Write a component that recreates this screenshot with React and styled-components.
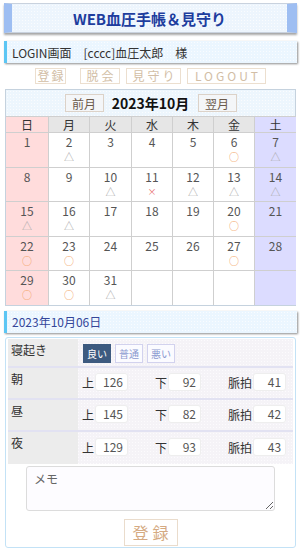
import React from "react";
import styled, { createGlobalStyle } from "styled-components";

const Global = createGlobalStyle`
  html, body { margin: 0; padding: 0; background: #fff; }
  body { font-family: "Noto Sans CJK JP", "Noto Sans", sans-serif; color: #333; }
  * { box-sizing: border-box; }
`;

const Page = styled.div`
  width: 300px;
  padding: 3px 3px 0 4px;
  display: flex;
  flex-direction: column;
`;

const dots = `radial-gradient(rgba(255,255,255,0.7) 0.6px, transparent 0.8px) 0 0 / 3px 3px`;

const Header = styled.div`
  height: 30px;
  border: 1px solid #c9d2de;
  border-left: 8px solid #9ebef2;
  border-right: 10px solid #9ebef2;
  background: ${dots}, #edf5fd;
  box-shadow: 0 2px 2px rgba(0,0,0,0.35);
  display: flex;
  align-items: center;
  justify-content: center;
  font-size: 15px;
  font-weight: bold;
  color: #1e3d9e;
`;

const Bar = styled.div`
  margin-top: ${p => p.$mt}px;
  height: 22px;
  border-left: 3px solid #5cc6f4;
  background: ${dots}, #ebf6ff;
  box-shadow: 1px 1px 2px rgba(0,0,0,0.45);
  display: flex;
  align-items: center;
  padding-left: 5px;
  font-size: 12px;
  color: ${p => p.$color};
  white-space: pre;
`;

const Nav = styled.div`
  margin-top: 5px;
  display: flex;
  justify-content: center;
  gap: 6px;
`;

const NavBtn = styled.div`
  width: ${p => p.$w}px;
  margin-right: ${p => p.$mr || 0}px;
  height: 16px;
  border: 1px solid #ecdfcf;
  color: #d2bea6;
  font-size: 12px;
  letter-spacing: ${p => p.$ls}px;
  white-space: nowrap;
  display: flex;
  align-items: center;
  justify-content: center;
  padding-left: ${p => p.$ls}px;
  line-height: 1;
`;

const Calendar = styled.div`
  margin-top: 5px;
  width: 291px;
  border: 1px solid #c5d2de;
  margin-left: 1px;
`;

const CalHead = styled.div`
  height: 26px;
  background: ${dots}, #edf6fd;
  display: flex;
  align-items: center;
  justify-content: center;
  gap: 7px;
`;

const MonthBtn = styled.div`
  width: 39px;
  height: 18px;
  border: 1px solid #dcd2c8;
  background: #f4f6f8;
  color: #6b5a4c;
  font-size: 12px;
  display: flex;
  align-items: center;
  justify-content: center;
`;

const MonthTitle = styled.div`
  font-size: 14px;
  font-weight: bold;
  color: #111;
  width: 80px;
  text-align: center;
`;

const Grid = styled.div`
  display: grid;
  grid-template-columns: 43px 41px 42px 41px 41px 41px 41px;
`;

const cellBg = (col, head) => {
  if (col === 0) return "#ffdcdc";
  if (col === 6) return "#dcdcff";
  return head ? "#e6e6e6" : "#ffffff";
};

const WeekHead = styled.div`
  height: 16px;
  background: ${p => cellBg(p.$col, true)};
  border-right: ${p => (p.$col === 6 ? "none" : "1px solid #cfcfcf")};
  border-top: 1px solid #cfcfcf;
  font-size: 12px;
  color: #333;
  display: flex;
  align-items: center;
  justify-content: center;
  line-height: 1;
`;

const Day = styled.div`
  height: 34.5px;
  background: ${p => cellBg(p.$col, false)};
  border-right: ${p => (p.$col === 6 ? "none" : "1px solid #cfcfcf")};
  border-top: 1px solid #cfcfcf;
  display: flex;
  flex-direction: column;
  align-items: center;
  padding-top: 2px;
`;

const DayNum = styled.div`
  font-size: 12px;
  color: #555;
  line-height: 14px;
`;

const markColor = { "△": "#aaaaaa", "○": "#f2a060", "×": "#e86a6a" };

const Mark = styled.div`
  font-size: ${p => (p.$m === "×" ? 9 : 10)}px;
  line-height: 12px;
  margin-top: 2px;
  color: ${p => markColor[p.$m] || "transparent"};
`;

const Card = styled.div`
  margin-top: 4px;
  margin-left: 1px;
  width: 291px;
  height: 211px;
  border: 1px solid #c3e2f6;
  border-radius: 3px;
  padding: 1px 2px 0 2px;
  display: flex;
  flex-direction: column;
  align-items: center;
`;

const Table = styled.div`
  width: 285px;
  display: grid;
  grid-template-columns: 70px 1fr;
  background: ${dots}, #f5f3f7;
`;

const Label = styled.div`
  height: ${p => p.$h}px;
  background: #ececec;
  font-size: 12px;
  color: #333;
  padding: 2px 0 0 3px;
  border-bottom: ${p => (p.$last ? "none" : "2px solid #e2e2f2")};
`;

const Cell = styled.div`
  height: ${p => p.$h}px;
  display: flex;
  align-items: ${p => (p.$top ? "flex-start" : "center")};
  padding: ${p => (p.$top ? "5px 0 0 5px" : "0 0 0 4px")};
  gap: ${p => p.$gap}px;
  border-bottom: ${p => (p.$last ? "none" : "2px solid #e2e2f2")};
`;

const Choice = styled.div`
  width: 28px;
  height: 19px;
  font-size: 10px;
  display: flex;
  align-items: center;
  justify-content: center;
  background: ${p => (p.$on ? "#3d5a80" : "#fbfbff")};
  color: ${p => (p.$on ? "#ffffff" : "#8c9ad0")};
  border: 1px solid ${p => (p.$on ? "#3d5a80" : "#d2d2ee")};
`;

const Field = styled.div`
  display: flex;
  align-items: center;
  font-size: 12px;
  color: #333;
`;

const NumBox = styled.div`
  width: 33px;
  height: 18px;
  margin-left: 1px;
  background: #fff;
  border: 1px solid #eeeeee;
  border-radius: 3px;
  font-size: 12px;
  color: #555;
  display: flex;
  align-items: center;
  justify-content: flex-end;
  padding-right: 4px;
  margin-top: -2px;
`;

const Memo = styled.textarea`
  margin-top: 2px;
  width: 249px;
  height: 45px;
  border: 1px solid #dcdcdc;
  border-radius: 3px;
  background: #fdfcff;
  font-family: "Noto Sans CJK JP", sans-serif;
  font-size: 12px;
  padding: 3px 7px;
  color: #555;
  &::placeholder { color: #666; }
`;

const Submit = styled.div`
  margin-top: 8px;
  width: 54px;
  height: 27px;
  border: 1px solid #eadccc;
  color: #d5aa82;
  font-size: 16px;
  letter-spacing: 4px;
  padding-left: 4px;
  display: flex;
  align-items: center;
  justify-content: center;
`;

const weekdays = ["日", "月", "火", "水", "木", "金", "土"];
const marks = {
  2: "△", 6: "○", 7: "△", 10: "△", 11: "×", 12: "△", 13: "△", 14: "△",
  15: "△", 16: "△", 20: "○", 22: "○", 23: "○", 27: "○", 29: "○", 30: "○", 31: "△",
};

const cells = [];
for (let i = 0; i < 35; i++) cells.push(i < 31 ? i + 1 : null);

const readings = [
  ["朝", 126, 92, 41],
  ["昼", 145, 82, 42],
  ["夜", 129, 93, 43],
];

export default function App() {
  return (
    <>
      <Global />
      <Page>
        <Header>WEB血圧手帳＆見守り</Header>
        <Bar $mt={8} $color="#333">{"LOGIN画面　[cccc]血圧太郎　様"}</Bar>
        <Nav>
          <NavBtn $w={31} $mr={8} $ls={2}>登録</NavBtn>
          <NavBtn $w={40} $ls={3}>脱会</NavBtn>
          <NavBtn $w={55} $ls={3}>見守り</NavBtn>
          <NavBtn $w={79} $ls={3}>LOGOUT</NavBtn>
        </Nav>
        <Calendar>
          <CalHead>
            <MonthBtn>前月</MonthBtn>
            <MonthTitle>2023年10月</MonthTitle>
            <MonthBtn>翌月</MonthBtn>
          </CalHead>
          <Grid>
            {weekdays.map((w, i) => (
              <WeekHead key={w} $col={i}>{w}</WeekHead>
            ))}
            {cells.map((d, i) => (
              <Day key={i} $col={i % 7}>
                {d && <DayNum>{d}</DayNum>}
                {d && <Mark $m={marks[d]}>{marks[d] || "　"}</Mark>}
              </Day>
            ))}
          </Grid>
        </Calendar>
        <Bar $mt={5} $color="#34469a">2023年10月06日</Bar>
        <Card>
          <Table>
            <Label $h={29}>寝起き</Label>
            <Cell $h={29} $top $gap={4}>
              <Choice $on>良い</Choice>
              <Choice>普通</Choice>
              <Choice>悪い</Choice>
            </Cell>
            {readings.map(([t, a, b, c], i) => (
              <React.Fragment key={t}>
                <Label $h={32} $last={i === 2}>{t}</Label>
                <Cell $h={32} $gap={27} $last={i === 2}>
                  <Field>上<NumBox>{a}</NumBox></Field>
                  <Field>下<NumBox>{b}</NumBox></Field>
                  <Field>脈拍<NumBox>{c}</NumBox></Field>
                </Cell>
              </React.Fragment>
            ))}
          </Table>
          <Memo placeholder="メモ" />
          <Submit>登録</Submit>
        </Card>
      </Page>
    </>
  );
}
